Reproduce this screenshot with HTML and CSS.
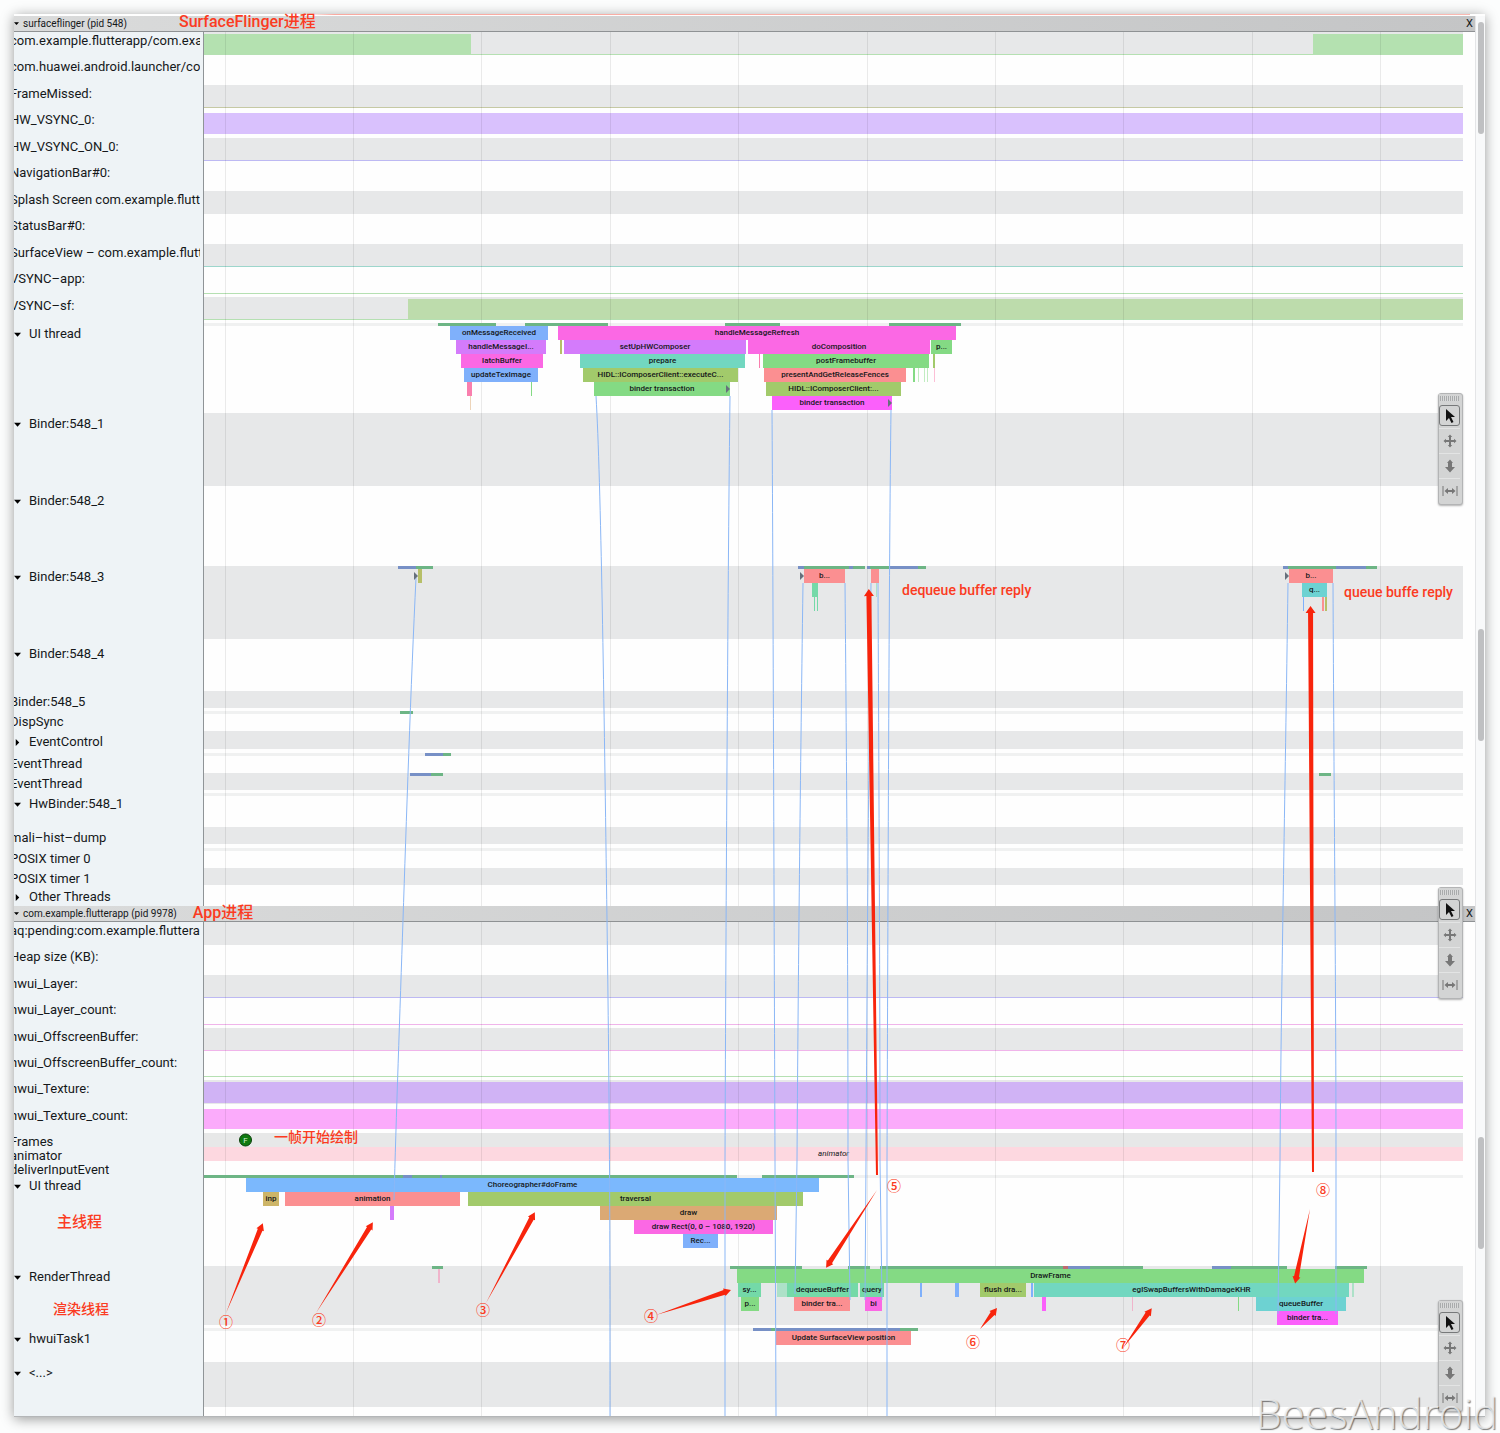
FILE: index.html
```html
<!DOCTYPE html>
<html lang="zh-CN">
<head>
<meta charset="utf-8">
<meta name="viewport" content="width=device-width, initial-scale=1">
<title>surfaceflinger / com.example.flutterapp</title>
<link rel="stylesheet" href="styles.css">
</head>
<body>
<svg class="sprite" aria-hidden="true">
  <symbol id="down" viewBox="0 0 8 8"><path d="M0 2h8L4 6.500z"/></symbol>
  <symbol id="right" viewBox="0 0 8 8"><path d="M2 0v8l4-4z"/></symbol>
  <symbol id="select" viewBox="0 0 16 16"><path d="M4 1v12l3-3 2.500 5 2-1-2.500-5h4z" fill="#111"/></symbol>
  <symbol id="pan" viewBox="0 0 16 16"><path d="M8 1.500l2.200 2.500H9v3h3V5.800L14.500 8 12 10.200V9H9v3h1.200L8 14.500 5.800 12H7V9H4v1.200L1.500 8 4 5.800V7h3V4H5.800z" fill="#777"/></symbol>
  <symbol id="zoom" viewBox="0 0 16 16"><path d="M8 1.500L11 5H10v4h3l-5 5.500L3 9h3V5H5z" fill="#777"/></symbol>
  <symbol id="timing" viewBox="0 0 16 16"><path d="M1 3v10M15 3v10" stroke="#777" fill="none"/><path d="M2.500 8L6 5v2h4V5l3.500 3L10 11V9H6v2z" fill="#777"/></symbol>
</svg>

<div class="page">
<main class="panel">
<div class="trace">

  <header class="process">
    <button class="toggle small"><svg><use href="#down"/></svg>surfaceflinger (pid 548)</button>
    <span class="note title">SurfaceFlinger进程</span>
    <button class="close" aria-label="Close surfaceflinger">X</button>
  </header>

  <section class="counters eleven">
    <div class="row"><div class="label">com.example.flutterapp/com.example</div><div class="track line-green"><i class="fill green" style="--s:204;--d:267"></i><i class="fill green" style="--s:1313;--d:150"></i></div></div>
    <div class="row"><div class="label">com.huawei.android.launcher/com.huawei</div><div class="track"></div></div>
    <div class="row"><div class="label">FrameMissed:</div><div class="track line-tan"></div></div>
    <div class="row"><div class="label">HW_VSYNC_0:</div><div class="track"><i class="fill lilac" style="--s:204;--d:1259"></i></div></div>
    <div class="row"><div class="label">HW_VSYNC_ON_0:</div><div class="track line-violet"></div></div>
    <div class="row"><div class="label">NavigationBar#0:</div><div class="track"></div></div>
    <div class="row"><div class="label">Splash Screen com.example.flutterapp</div><div class="track"></div></div>
    <div class="row"><div class="label">StatusBar#0:</div><div class="track"></div></div>
    <div class="row"><div class="label">SurfaceView – com.example.flutterapp</div><div class="track line-teal"></div></div>
    <div class="row"><div class="label">VSYNC–app:</div><div class="track line-green"></div></div>
    <div class="row"><div class="label">VSYNC–sf:</div><div class="track line-green"><i class="fill moss" style="--s:408;--d:1055"></i></div></div>
  </section>

  <section class="threads">
    <div class="row">
      <div class="label"><button class="toggle"><svg><use href="#down"/></svg>UI thread</button></div>
      <div class="track">
        <div class="sched"><i class="run" style="--s:438;--d:58"></i><i class="run" style="--s:525;--d:83"></i><i class="run" style="--s:725;--d:55"></i><i class="run" style="--s:889;--d:72"></i></div>
        <div class="lane"><div class="slice blue" style="--s:450;--d:98">onMessageReceived</div><div class="slice pink" style="--s:558;--d:398">handleMessageRefresh</div></div>
        <div class="lane"><div class="slice purple" style="--s:456;--d:90">handleMessageI...</div><div class="slice olive" style="--s:560;--d:2"></div><div class="slice purple" style="--s:564;--d:182">setUpHWComposer</div><div class="slice pink" style="--s:748;--d:182">doComposition</div><div class="slice green" style="--s:931;--d:21">p...</div></div>
        <div class="lane"><div class="slice pink" style="--s:461;--d:82">latchBuffer</div><div class="slice teal" style="--s:580;--d:165">prepare</div><div class="slice rose" style="--s:759;--d:1"></div><div class="slice green" style="--s:763;--d:166">postFramebuffer</div><div class="slice lime" style="--s:933;--d:2"></div></div>
        <div class="lane"><div class="slice blue" style="--s:464;--d:74">updateTexImage</div><div class="slice lime" style="--s:583;--d:155">HIDL::IComposerClient::executeC...</div><div class="slice coral" style="--s:764;--d:142">presentAndGetReleaseFences</div><div class="slice green" style="--s:913;--d:2"></div><div class="slice green faint" style="--s:918;--d:1"></div><div class="slice green faint" style="--s:924;--d:1"></div><div class="slice green faint" style="--s:927;--d:1"></div><div class="slice rose faint" style="--s:934;--d:1"></div></div>
        <div class="lane"><div class="slice rose" style="--s:467;--d:5"></div><div class="slice green" style="--s:531;--d:1"></div><div class="slice green" style="--s:594;--d:136">binder transaction</div><div class="slice lime" style="--s:766;--d:135">HIDL::IComposerClient:...</div></div>
        <div class="lane"><div class="slice tan faint" style="--s:470;--d:1"></div><div class="slice magenta" style="--s:772;--d:120">binder transaction</div></div>
      </div>
    </div>
    <div class="row spaced"><div class="label"><button class="toggle"><svg><use href="#down"/></svg>Binder:548_1</button></div><div class="track depth-5"></div></div>
    <div class="row"><div class="label"><button class="toggle"><svg><use href="#down"/></svg>Binder:548_2</button></div><div class="track depth-5"></div></div>
    <div class="row spaced">
      <div class="label"><button class="toggle"><svg><use href="#down"/></svg>Binder:548_3</button></div>
      <div class="track depth-5">
        <div class="sched"><i class="wake" style="--s:398;--d:18"></i><i class="run" style="--s:416;--d:17"></i><i class="wake" style="--s:798;--d:6"></i><i class="run" style="--s:804;--d:61"></i><i class="wake" style="--s:849;--d:4"></i><i class="wake" style="--s:867;--d:3"></i><i class="run" style="--s:870;--d:19"></i><i class="wake" style="--s:889;--d:29"></i><i class="run" style="--s:918;--d:8"></i><i class="wake" style="--s:1283;--d:5"></i><i class="run" style="--s:1288;--d:48"></i><i class="wake" style="--s:1336;--d:30"></i><i class="run" style="--s:1366;--d:11"></i></div>
        <div class="lane"><div class="slice olive" style="--s:418;--d:4"></div><div class="slice coral" style="--s:804;--d:41">b...</div><div class="slice coral" style="--s:871;--d:8"></div><div class="slice coral" style="--s:1289;--d:44">b...</div></div>
        <div class="lane"><div class="slice mint" style="--s:812;--d:6"></div><div class="slice mint faint" style="--s:876;--d:1"></div><div class="slice aqua" style="--s:1302;--d:25">q...</div></div>
        <div class="lane"><div class="slice mint" style="--s:814;--d:1"></div><div class="slice mint" style="--s:817;--d:1"></div><div class="slice blue" style="--s:1303;--d:1"></div><div class="slice coral" style="--s:1322;--d:2"></div><div class="slice olive" style="--s:1325;--d:2"></div></div>
      </div>
    </div>
    <div class="row"><div class="label"><button class="toggle"><svg><use href="#down"/></svg>Binder:548_4</button></div><div class="track depth-3"></div></div>
    <div class="row"><div class="label">Binder:548_5</div><div class="track depth-1"></div></div>
    <div class="row"><div class="label">DispSync</div><div class="track depth-1"><div class="sched"><i class="run" style="--s:400;--d:13"></i></div></div></div>
    <div class="row spaced"><div class="label"><button class="toggle"><svg><use href="#right"/></svg>EventControl</button></div><div class="track depth-1 collapsed"></div></div>
    <div class="row"><div class="label">EventThread</div><div class="track depth-1"><div class="sched"><i class="wake" style="--s:425;--d:18"></i><i class="run" style="--s:443;--d:8"></i></div></div></div>
    <div class="row"><div class="label">EventThread</div><div class="track depth-1"><div class="sched"><i class="wake" style="--s:410;--d:21"></i><i class="run" style="--s:431;--d:12"></i><i class="run" style="--s:1319;--d:12"></i></div></div></div>
    <div class="row"><div class="label"><button class="toggle"><svg><use href="#down"/></svg>HwBinder:548_1</button></div><div class="track depth-2"><div class="sched"></div></div></div>
    <div class="row spaced"><div class="label">mali–hist–dump</div><div class="track depth-1"></div></div>
    <div class="row"><div class="label">POSIX timer 0</div><div class="track depth-1"><div class="sched"></div></div></div>
    <div class="row"><div class="label">POSIX timer 1</div><div class="track depth-1"></div></div>
    <div class="row other"><div class="label"><button class="toggle"><svg><use href="#right"/></svg>Other Threads</button></div><div class="track"></div></div>
  </section>

  <header class="process">
    <button class="toggle small"><svg><use href="#down"/></svg>com.example.flutterapp (pid 9978)</button>
    <span class="note title near">App进程</span>
    <button class="close" aria-label="Close com.example.flutterapp">X</button>
  </header>

  <section class="counters eight">
    <div class="row"><div class="label">aq:pending:com.example.flutterapp</div><div class="track"></div></div>
    <div class="row"><div class="label">Heap size (KB):</div><div class="track"></div></div>
    <div class="row"><div class="label">hwui_Layer:</div><div class="track line-violet"></div></div>
    <div class="row"><div class="label">hwui_Layer_count:</div><div class="track line-pink"></div></div>
    <div class="row"><div class="label">hwui_OffscreenBuffer:</div><div class="track line-pink"></div></div>
    <div class="row"><div class="label">hwui_OffscreenBuffer_count:</div><div class="track line-green"></div></div>
    <div class="row"><div class="label">hwui_Texture:</div><div class="track"><i class="fill violet" style="--s:204;--d:1259"></i></div></div>
    <div class="row"><div class="label">hwui_Texture_count:</div><div class="track"><i class="fill orchid" style="--s:204;--d:1259"></i></div></div>
  </section>

  <section class="asyncs">
    <div class="row"><div class="label">Frames</div><div class="track frames"></div></div>
    <div class="row"><div class="label">animator</div><div class="track animator"><em>animator</em></div></div>
    <div class="row clipped"><div class="label">deliverInputEvent</div><div class="track"></div></div>
  </section>

  <section class="threads">
    <div class="row spaced">
      <div class="label"><button class="toggle"><svg><use href="#down"/></svg>UI thread</button><span class="note main-thread">主线程</span></div>
      <div class="track depth-6">
        <div class="sched"><i class="run" style="--s:204;--d:533"></i><i class="wake" style="--s:403;--d:9"></i><i class="wake" style="--s:440;--d:2"></i><i class="run" style="--s:762;--d:92"></i></div>
        <div class="lane"><div class="slice sky" style="--s:246;--d:573">Choreographer#doFrame</div></div>
        <div class="lane"><div class="slice ochre" style="--s:263;--d:16">inp</div><div class="slice coral" style="--s:285;--d:175">animation</div><div class="slice lime" style="--s:468;--d:335">traversal</div></div>
        <div class="lane"><div class="slice purple" style="--s:390;--d:4"></div><div class="slice tan" style="--s:600;--d:177">draw</div></div>
        <div class="lane"><div class="slice pink" style="--s:634;--d:139">draw Rect(0, 0 – 1080, 1920)</div></div>
        <div class="lane"><div class="slice blue" style="--s:683;--d:35">Rec...</div></div>
      </div>
    </div>
    <div class="row">
      <div class="label"><button class="toggle"><svg><use href="#down"/></svg>RenderThread</button><span class="note render-thread">渲染线程</span></div>
      <div class="track">
        <div class="sched"><i class="run" style="--s:432;--d:11"></i><i class="run" style="--s:730;--d:72"></i><i class="run" style="--s:848;--d:22"></i><i class="run" style="--s:880;--d:263"></i><i class="halt" style="--s:1063;--d:5"></i><i class="wake" style="--s:1068;--d:22"></i><i class="wake" style="--s:1212;--d:19"></i><i class="run" style="--s:1231;--d:56"></i><i class="run" style="--s:1335;--d:32"></i></div>
        <div class="lane"><div class="slice rose faint" style="--s:438;--d:2"></div><div class="slice green" style="--s:737;--d:627">DrawFrame</div></div>
        <div class="lane"><div class="slice mint" style="--s:738;--d:23">sy...</div><div class="slice mint faint" style="--s:777;--d:10"></div><div class="slice mint" style="--s:787;--d:71">dequeueBuffer</div><div class="slice mint" style="--s:860;--d:24">query</div><div class="slice blue" style="--s:920;--d:2"></div><div class="slice blue" style="--s:955;--d:4"></div><div class="slice lime" style="--s:980;--d:46">flush dra...</div><div class="slice blue" style="--s:1031;--d:2"></div><div class="slice teal" style="--s:1034;--d:315">eglSwapBuffersWithDamageKHR</div><div class="slice mint faint" style="--s:1352;--d:2"></div></div>
        <div class="lane"><div class="slice green" style="--s:741;--d:18">p...</div><div class="slice coral" style="--s:794;--d:56">binder tra...</div><div class="slice pink" style="--s:865;--d:17">bi</div><div class="slice magenta" style="--s:1042;--d:4"></div><div class="slice rose faint" style="--s:1132;--d:1"></div><div class="slice green" style="--s:1238;--d:1"></div><div class="slice aqua" style="--s:1256;--d:90">queueBuffer</div></div>
        <div class="lane"><div class="slice magenta" style="--s:1277;--d:61">binder tra...</div></div>
      </div>
    </div>
    <div class="row">
      <div class="label"><button class="toggle"><svg><use href="#down"/></svg>hwuiTask1</button></div>
      <div class="track depth-2">
        <div class="sched"><i class="wake" style="--s:753;--d:18"></i><i class="run" style="--s:771;--d:5"></i><i class="wake" style="--s:776;--d:124"></i><i class="run" style="--s:900;--d:18"></i></div>
        <div class="lane"><div class="slice coral" style="--s:776;--d:135">Update SurfaceView position</div></div>
      </div>
    </div>
    <div class="row"><div class="label"><button class="toggle"><svg><use href="#down"/></svg>&lt;...&gt;</button></div><div class="track depth-3"></div></div>
  </section>
  <div class="row tail"><div class="label"></div><div class="track"></div></div>

  <div class="layer gridlines" aria-hidden="true">
    <svg viewBox="204 16 1259 1400" preserveAspectRatio="none">
      <path d="M225.500 32V1416M353.500 32V1416M481.500 32V1416M610.500 32V1416M738.500 32V1416M867.500 32V1416M995.500 32V1416M1123.500 32V1416M1252.500 32V1416M1380.500 32V1416"/>
    </svg>
  </div>

  <div class="layer notes">
    <svg viewBox="204 16 1259 1400" preserveAspectRatio="none" aria-hidden="true">
      <g class="flows">
        <path d="M416 578C411 680 406 830 403 920S396 1120 394 1200"/>
        <path d="M596 396C601 480 604 700 607 920S610 1250 610 1416"/>
        <path d="M730 396C728 560 726 900 725 1160V1416"/>
        <path d="M772 410C773 560 774 900 775 1160L776 1416"/>
        <path d="M891 410C889 560 888 900 887 1160V1416"/>
        <path d="M803 583C800 800 798 1000 797 1160L795 1294"/>
        <path d="M845 583C847 800 848 1000 848 1160L850 1300"/>
        <path d="M871 583C868 800 867 1000 866 1160L865 1300"/>
        <path d="M878 583C879 800 880 1000 880 1160L882 1300"/>
        <path d="M1288 583C1285 800 1281 1000 1280 1160L1278 1314"/>
        <path d="M1333 583C1334 800 1336 1000 1336 1160V1314"/>
      </g>
      <g class="ends">
        <path d="M414 572v8l4-4zM726 385v8l4-4zM888 399v8l4-4zM800 572v8l4-4zM1285 572v8l4-4z"/>
      </g>
      <g class="arrows">
        <path transform="translate(226 1313) rotate(-67.700)" d="M0 0L90-2.500V-4L97 0 90 4V2.500z"/>
        <path transform="translate(316 1313) rotate(-57.900)" d="M0 0L100-2.500V-4L107 0 100 4V2.500z"/>
        <path transform="translate(486 1303) rotate(-61.700)" d="M0 0L96-2.500V-4L103 0 96 4V2.500z"/>
        <path transform="translate(656 1315) rotate(-18.400)" d="M0 0L72-2.500V-4L79 0 72 4V2.500z"/>
        <path transform="translate(877 1190) rotate(123.200)" d="M0 0L86-2.500V-4L93 0 86 4V2.500z"/>
        <path transform="translate(980 1329) rotate(-51)" d="M0 0L20-2.500V-4L27 0 20 4V2.500z"/>
        <path transform="translate(1123 1348) rotate(-54.100)" d="M0 0L42-2.500V-4L49 0 42 4V2.500z"/>
        <path transform="translate(1310 1209) rotate(101.300)" d="M0 0L69-2.500V-4L76 0 69 4V2.500z"/>
        <path transform="translate(877 1175) rotate(-90.800)" d="M0-1L579-2.500V-5L586 0 579 5V2.500L0 1z"/>
        <path transform="translate(1313 1172) rotate(-90.250)" d="M0-1L559-2.500V-5L566 0 559 5V2.500L0 1z"/>
      </g>
    </svg>
    <span class="note pin" style="--s:902;--y:574">dequeue buffer reply</span>
    <span class="note pin" style="--s:1344;--y:576">queue buffe reply</span>
    <span class="note pin" style="--s:274;--y:1121">一帧开始绘制</span>
    <span class="frame-dot pin" style="--s:239;--y:1124">F</span>
    <span class="note pin mark" style="--s:226;--y:1306">①</span>
    <span class="note pin mark" style="--s:319;--y:1304">②</span>
    <span class="note pin mark" style="--s:483;--y:1294">③</span>
    <span class="note pin mark" style="--s:651;--y:1300">④</span>
    <span class="note pin mark" style="--s:894;--y:1170">⑤</span>
    <span class="note pin mark" style="--s:973;--y:1326">⑥</span>
    <span class="note pin mark" style="--s:1123;--y:1329">⑦</span>
    <span class="note pin mark" style="--s:1323;--y:1174">⑧</span>
  </div>

  <div class="tools" style="--y:377">
    <span class="grip"></span>
    <button class="on" aria-label="Selection"><svg><use href="#select"/></svg></button>
    <button aria-label="Pan"><svg><use href="#pan"/></svg></button>
    <button aria-label="Zoom"><svg><use href="#zoom"/></svg></button>
    <button aria-label="Timing"><svg><use href="#timing"/></svg></button>
  </div>
  <div class="tools" style="--y:871">
    <span class="grip"></span>
    <button class="on" aria-label="Selection"><svg><use href="#select"/></svg></button>
    <button aria-label="Pan"><svg><use href="#pan"/></svg></button>
    <button aria-label="Zoom"><svg><use href="#zoom"/></svg></button>
    <button aria-label="Timing"><svg><use href="#timing"/></svg></button>
  </div>
  <div class="tools" style="--y:1284">
    <span class="grip"></span>
    <button class="on" aria-label="Selection"><svg><use href="#select"/></svg></button>
    <button aria-label="Pan"><svg><use href="#pan"/></svg></button>
    <button aria-label="Zoom"><svg><use href="#zoom"/></svg></button>
    <button aria-label="Timing"><svg><use href="#timing"/></svg></button>
  </div>
</div>

<div class="gutter" aria-hidden="true"><i></i><i></i><i></i></div>
</main>
<div class="watermark">BeesAndroid</div>
</div>
</body>
</html>
```
FILE: styles.css
```css
* { box-sizing: border-box; }

body {
  margin: 0;
  background: #fcfdfd;
  color: #15181a;
  font-family: Roboto, "Noto Sans CJK SC", sans-serif;
  font-size: 13px;
  line-height: 18px;
}

button {
  margin: 0;
  padding: 0;
  border: 0;
  background: none;
  color: inherit;
  font: inherit;
}

.sprite { position: absolute; width: 0; height: 0; }

.page {
  position: relative;
  padding: 14px 15px 16px 14px;
  overflow: hidden;
}

.panel {
  display: flex;
  padding-top: 2px;
  border-bottom: 1px solid #b4b6b8;
  background: #fefefe;
  background-image: linear-gradient(to right, transparent 20%, #f9a9a0 22%, #f9b9b2);
  background-repeat: no-repeat;
  background-size: 99% 1px;
  box-shadow: 0 2px 12px rgba(0, 0, 0, 0.4);
}

.trace {
  position: relative;
  flex: 1;
  min-width: 0;
}

/* Process headers */
.process {
  position: relative;
  z-index: 2;
  display: flex;
  align-items: center;
  height: 16px;
  border-bottom: 1px solid #8f9294;
  background: linear-gradient(to right, #dadbdb, #c4c5c6);
}

.title { margin-left: 52px; padding-bottom: 4px; font-size: 16px; }
.title.near { margin-left: 16px; padding-bottom: 2px; }
.close { margin-left: auto; padding-right: 2px; font-size: 11px; }

.toggle {
  display: flex;
  align-items: center;
  gap: 8px;
  line-height: 18px;
  white-space: nowrap;
}
.toggle svg { width: 7px; height: 7px; }
.toggle.small { gap: 4px; font-size: 10px; }
.toggle.small svg { width: 5px; height: 5px; }

/* Rows: a heading column and a timeline track */
.row { display: flex; padding-right: 12px; }

.label {
  flex: none;
  width: 186px;
  margin-right: 4px;
  background: #eef3f6;
  box-shadow: 3px 0 #eef3f6, 4px 0 #8f9497;
  white-space: nowrap;
  text-indent: -4px;
  overflow: hidden;
}
.label .toggle { text-indent: 0; }

.track {
  position: relative;
  flex: 1;
  margin-bottom: 3px;
}

.counters { display: grid; grid-auto-rows: 1fr; }
.counters.eleven { min-height: 291px; }
.counters.eight { min-height: 211px; }
.counters .track { border-bottom: 1px solid transparent; }
.counters .row:nth-child(odd) .track,
.threads .row:nth-child(even) .track { background: #e7e8e9; }

.counters .track.line-green { border-color: #b5e0b2; }
.counters .track.line-tan { border-color: #c6c9a4; }
.counters .track.line-violet { border-color: #bdb9f3; }
.counters .track.line-teal { border-color: #9dd6cc; }
.counters .track.line-pink { border-color: #f0b4ea; }

/* Everything on a track is placed by start (--s) and duration (--d) */
.fill, .slice, .sched i {
  position: absolute;
  left: calc((var(--s) - 204) / 1259 * 100%);
  width: calc(var(--d) / 1259 * 100%);
}

.fill { top: 2px; bottom: 0; }
.fill.green { background: #b4e1b0; }
.fill.lilac { background: #d9c1fd; }
.fill.moss { background: #bddcac; }
.fill.violet { background: #d0b3f5; }
.fill.orchid { background: #fbabfb; }

/* Threads */
.threads .label { padding-top: 2px; }
.sched { position: relative; height: 3px; background: #f0f1f1; }
.threads .row:nth-child(even) .sched { background: none; }
.sched i { top: 0; z-index: 2; height: 3px; }
.sched .run { background: #6db585; }
.sched .wake { background: #7790c6; }
.sched .halt { background: #c06a70; }

.lane { position: relative; height: 14px; }
.depth-1 { min-height: 17px; }
.depth-2 { min-height: 31px; }
.depth-3 { min-height: 45px; }
.depth-5 { min-height: 73px; }
.depth-6 { min-height: 87px; }
.depth-1.collapsed { min-height: 18px; }
.spaced .track { margin-bottom: 4px; }
.other .label { height: 18px; padding-top: 0; }
.tail { height: 6px; }

.slice {
  z-index: 2;
  height: 14px;
  overflow: hidden;
  font-size: 8px;
  font-weight: 500;
  line-height: 13px;
  text-align: center;
  white-space: nowrap;
}
.slice.faint { opacity: 0.5; }
.slice.blue { background: #7fb0fb; }
.slice.sky { background: #7bb8fd; }
.slice.pink { background: #fb68e4; }
.slice.magenta { background: #fb60fb; }
.slice.purple { background: #d47bfb; }
.slice.teal { background: #72d7c0; }
.slice.aqua { background: #6dd2d2; }
.slice.mint { background: #74d9a8; }
.slice.green { background: #84da84; }
.slice.lime { background: #a2ca6b; }
.slice.olive { background: #b7bf68; }
.slice.ochre { background: #cdb568; }
.slice.tan { background: #dba974; }
.slice.coral { background: #fb8f91; }
.slice.rose { background: #f97fae; }

/* Async rows */
.asyncs .row { height: 14px; }
.asyncs .label { height: 18px; background: none; }
.asyncs .clipped .label { height: 14px; }
.asyncs { background: linear-gradient(to right, #eef3f6 189px, transparent 0); }
.asyncs .track { margin-bottom: 0; }
.frames { background: #e7e8e8; }
.animator {
  background: #fdd8e0;
  font-size: 8px;
  line-height: 13px;
  text-align: center;
}

/* Layers over the rows */
.layer {
  position: absolute;
  inset: 0 12px 0 190px;
  pointer-events: none;
}
.layer svg { display: block; width: 100%; height: 100%; }
.gridlines { z-index: 1; }
.gridlines path { stroke: rgba(0, 0, 0, 0.08); fill: none; }
.notes { z-index: 3; }
.flows { fill: none; stroke: #8bb7f6; stroke-width: 1; }
.ends { fill: #66707c; }
.arrows { fill: #f8240c; }

.note { color: #fb3b22; font-weight: 500; white-space: nowrap; }
.main-thread, .render-thread { display: block; text-indent: 0; }
.main-thread { padding: 18px 0 0 43px; font-size: 15px; }
.render-thread { padding: 14px 0 0 39px; font-size: 14px; }

.pin {
  position: absolute;
  top: calc(var(--y) * 1px);
  left: calc((var(--s) - 204) / 1259 * 100%);
  font-size: 14px;
  line-height: 1;
  transform: translateY(-50%);
}
.mark { transform: translate(-50%, -50%); }

.frame-dot {
  width: 13px;
  height: 13px;
  border: 1px solid #0a3f0a;
  border-radius: 50%;
  background: #0f7a10;
  color: #d8f0d8;
  font-size: 8px;
  line-height: 11px;
  text-align: center;
}

/* Mouse mode tools */
.tools {
  position: absolute;
  top: calc(var(--y) * 1px);
  right: 12px;
  z-index: 4;
  width: 25px;
  padding: 0 2px 1px 0;
  border: 1px solid #b3b4b5;
  border-radius: 3px;
  background: #d3d4d4;
  box-shadow: 0 1px 2px rgba(0, 0, 0, 0.3);
}
.grip {
  display: block;
  height: 9px;
  border: solid #d3d4d4;
  border-width: 2px 1px;
  background: repeating-linear-gradient(to right, #a9abac 0 1px, #d9dada 1px 2px);
}
.tools button {
  display: grid;
  place-items: center;
  width: 100%;
  height: 25px;
  border-top: 1px solid #e3e4e4;
}
.tools button.on {
  height: 21px;
  margin: 2px 0;
  border: 1px solid #77797a;
  border-radius: 3px;
}
.tools svg { width: 16px; height: 16px; }

/* Scroll bars */
.gutter {
  display: grid;
  grid-template-rows: 607px 508px 1fr;
  flex: none;
  width: 10px;
  padding-top: 6px;
  border-left: 1px solid #e4e5e7;
  background: #f8f9fa;
}
.gutter i {
  width: 6px;
  height: 112px;
  margin-left: 2px;
  border-radius: 3px;
  background: #bfc0c2;
}

.watermark {
  position: absolute;
  right: 2px;
  bottom: 0;
  z-index: 5;
  color: rgba(240, 241, 242, 0.8);
  font-family: "Open Sans", "Noto Sans", sans-serif;
  font-weight: 300;
  font-size: 42px;
  line-height: 40px;
  text-shadow: 1px 1px 1px rgba(0, 0, 0, 0.5);
}
```
